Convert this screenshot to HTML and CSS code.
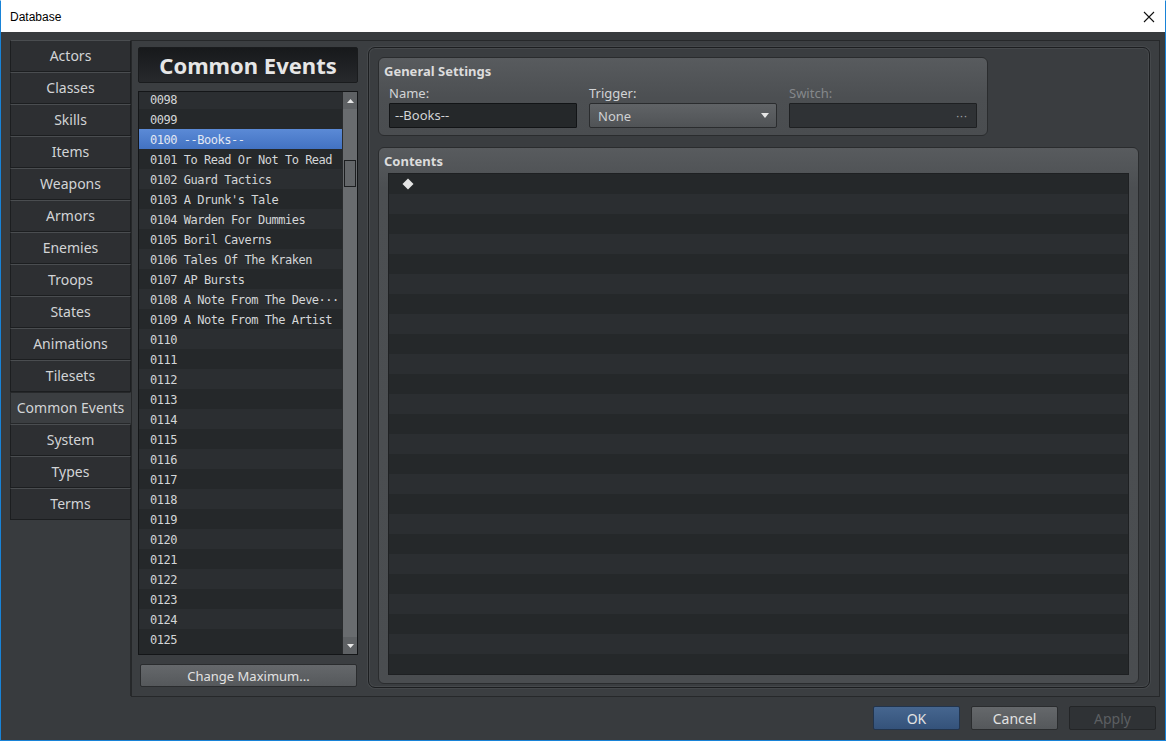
FILE: index.html
```html
<!DOCTYPE html>
<html lang="en">
<head>
    <meta charset="UTF-8">
    <title>Database</title>
    <link rel="stylesheet" href="styles.css">
</head>
<body>
    <div class="window">
        <!-- title bar -->
        <div class="titlebar">
            <span class="title">Database</span>
            <svg class="close" width="12" height="12" viewBox="0 0 12 12">
                <path d="M1 1 L11 11 M11 1 L1 11" stroke="#111" stroke-width="1.1" fill="none"/>
            </svg>
        </div>

        <div class="main">
            <!-- database tabs -->
            <div class="sidebar">
                <div class="tab">Actors</div>
                <div class="tab">Classes</div>
                <div class="tab">Skills</div>
                <div class="tab">Items</div>
                <div class="tab">Weapons</div>
                <div class="tab">Armors</div>
                <div class="tab">Enemies</div>
                <div class="tab">Troops</div>
                <div class="tab">States</div>
                <div class="tab">Animations</div>
                <div class="tab">Tilesets</div>
                <div class="tab active">Common Events</div>
                <div class="tab">System</div>
                <div class="tab">Types</div>
                <div class="tab">Terms</div>
            </div>

            <div class="page">
                <!-- event list -->
                <div class="list-column">
                    <div class="list-header">Common Events</div>
                    <div class="list-box">
                        <div class="rows" id="eventRows"></div>
                        <div class="scrollbar">
                            <div class="sb-btn">
                                <svg width="7" height="4" viewBox="0 0 7 4"><polygon points="0,4 7,4 3.5,0" fill="#e8e8e8"/></svg>
                            </div>
                            <div class="sb-track">
                                <div class="sb-thumb"></div>
                            </div>
                            <div class="sb-btn">
                                <svg width="7" height="4" viewBox="0 0 7 4"><polygon points="0,0 7,0 3.5,4" fill="#e8e8e8"/></svg>
                            </div>
                        </div>
                    </div>
                    <button class="btn btn-gray wide">Change Maximum...</button>
                </div>

                <!-- event editor -->
                <div class="editor">
                    <div class="group general">
                        <div class="group-title">General Settings</div>
                        <div class="fields">
                            <div class="field">
                                <label>Name:</label>
                                <div class="input">--Books--</div>
                            </div>
                            <div class="field">
                                <label>Trigger:</label>
                                <div class="combo">
                                    <span>None</span>
                                    <svg width="8" height="5" viewBox="0 0 8 5"><polygon points="0,0 8,0 4,5" fill="#e6e6e6"/></svg>
                                </div>
                            </div>
                            <div class="field disabled">
                                <label>Switch:</label>
                                <div class="input dim"><span class="dots">···</span></div>
                            </div>
                        </div>
                    </div>

                    <div class="group contents">
                        <div class="group-title">Contents</div>
                        <div class="command-list" id="commandRows">
                            <div class="cmd-row">
                                <svg class="diamond" width="12" height="12" viewBox="0 0 12 12"><polygon points="6,0.5 11.5,6 6,11.5 0.5,6" fill="#e4e4e4"/></svg>
                            </div>
                        </div>
                    </div>
                </div>
            </div>
        </div>

        <div class="footer">
            <button class="btn btn-blue">OK</button>
            <button class="btn btn-gray">Cancel</button>
            <button class="btn btn-off">Apply</button>
        </div>
    </div>

    <script>
        // list data
        const names = {
            100: '--Books--',
            101: 'To Read Or Not To Read',
            102: 'Guard Tactics',
            103: "A Drunk's Tale",
            104: 'Warden For Dummies',
            105: 'Boril Caverns',
            106: 'Tales Of The Kraken',
            107: 'AP Bursts',
            108: 'A Note From The Deve···',
            109: 'A Note From The Artist'
        };
        const rows = document.getElementById('eventRows');
        for (let i = 98; i <= 125; i++) {
            const row = document.createElement('div');
            row.className = 'row' + (i === 100 ? ' selected' : '');
            const id = String(i).padStart(4, '0');
            row.textContent = names[i] ? `${id} ${names[i]}` : id;
            rows.appendChild(row);
        }
        // empty command rows
        const cmds = document.getElementById('commandRows');
        for (let i = 0; i < 24; i++) {
            const row = document.createElement('div');
            row.className = 'cmd-row';
            cmds.appendChild(row);
        }
    </script>
</body>
</html>
```

FILE: styles.css
```css
:root {
    --window-border: #1883d7;
    --body-bg: #383b3e;
    --page-bg: #3b3e41;
    --tab-bg: #2d2f32;
    --line-dark: #1c1e20;
    --text: #d2d4d6;
    --row-light: #2b2e31;
    --row-dark: #25282a;
}
* {
    box-sizing: border-box;
}
body {
    margin: 0;
    font-family: "Noto Sans", "DejaVu Sans", sans-serif;
    color: var(--text);
}
.window {
    width: 1166px;
    height: 741px;
    border: 1px solid var(--window-border);
    border-top-color: #ffffff;
    background-color: var(--body-bg);
    display: flex;
    flex-direction: column;
}
.titlebar {
    height: 31px;
    background: #ffffff;
    display: flex;
    align-items: center;
    justify-content: space-between;
    padding: 0 10px 0 9px;
    color: #000;
}
.titlebar .title {
    font-family: "Liberation Sans", sans-serif;
    font-size: 12px;
}
.main {
    height: 665px;
    display: flex;
    padding: 8px 5px 0 9px;
}
.sidebar {
    width: 121px;
    display: flex;
    flex-direction: column;
    border-right: 1px solid #26282a;
    margin-bottom: 1px;
}
.tab {
    height: 32px;
    line-height: 30px;
    text-align: center;
    font-size: 14px;
    background: var(--tab-bg);
    border: 1px solid var(--line-dark);
    border-top-color: #4a4d50;
    margin-right: -1px;
}
.tab.active {
    background: var(--page-bg);
    border-color: #26282a;
    border-right-color: var(--page-bg);
    position: relative;
    z-index: 1;
}
.page {
    flex: 1;
    display: flex;
    gap: 10px;
    background: var(--page-bg);
    border: 1px solid #26282a;
    padding: 6px 9px 8px 6px;
}
.list-column {
    width: 220px;
    display: flex;
    flex-direction: column;
}
.list-header {
    height: 36px;
    margin-bottom: 8px;
    background: linear-gradient(#17191b, #27292c);
    border: 1px solid #1a1c1e;
    border-radius: 2px;
    text-align: center;
    font-weight: bold;
    font-size: 22px;
    line-height: 34px;
    color: #e6e6e6;
}
.list-box {
    flex: 1;
    display: flex;
    border: 1px solid #141618;
    overflow: hidden;
}
.rows {
    flex: 1;
    overflow: hidden;
    background: var(--row-dark);
}
.row {
    height: 20px;
    line-height: 23px;
    overflow: hidden;
    padding-left: 11px;
    font-family: "DejaVu Sans Mono", monospace;
    font-size: 12px;
    letter-spacing: -0.48px;
    white-space: nowrap;
    color: #d4d6d8;
    background: var(--row-light);
}
.row:first-child {
    margin-top: -3px;
}
.row:nth-child(even) {
    background: var(--row-dark);
}
.row.selected {
    background: linear-gradient(#5b8ad6, #4272c2);
    color: #e2e8f4;
}
.scrollbar {
    width: 15px;
    display: flex;
    flex-direction: column;
    background: #696c6f;
    border-left: 1px solid #2a2c2e;
}
.sb-btn {
    height: 17px;
    display: flex;
    align-items: center;
    justify-content: center;
    background: #5e6164;
}
.sb-track {
    flex: 1;
    padding-top: 51px;
}
.sb-thumb {
    height: 27px;
    margin: 0 1px;
    border: 1px solid #1c1e20;
    background: #636669;
}
.btn {
    font-family: "Noto Sans", "DejaVu Sans", sans-serif;
    font-size: 14px;
    height: 24px;
    border-radius: 2px;
    padding: 0;
    color: #e2e2e2;
}
.btn.wide {
    height: 23px;
    margin: 9px 1px 1px 2px;
    font-size: 13px;
}
.btn-gray {
    background: linear-gradient(#65686b, #55585b);
    border: 1px solid #2a2c2e;
}
.btn-blue {
    background: linear-gradient(#46668f, #34527a);
    border: 1px solid #22344c;
}
.btn-off {
    background: #2f3235;
    border: 1px solid #232527;
    color: #5c5f62;
}
.editor {
    flex: 1;
    display: flex;
    flex-direction: column;
    gap: 11px;
    border: 1px solid #1c1e20;
    box-shadow: inset 0 0 0 1px #46494c, 0 0 0 1px #45484b;
    border-radius: 7px;
    background: #3a3d40;
    padding: 9px 10px 7px 9px;
}
.group {
    border: 1px solid #2a2c2e;
    border-radius: 6px;
    background: linear-gradient(#585b5e, #4c4f52 40px, #4a4d50);
}
.group-title {
    font-weight: bold;
    font-size: 13px;
    line-height: 18px;
    color: #dcdcdc;
}
.general {
    align-self: flex-start;
    width: 610px;
    padding: 4px 9px 7px 5px;
}
.fields {
    display: grid;
    grid-template-columns: 188px 188px 188px;
    gap: 12px;
    margin: 4px 0 0 5px;
}
.field label {
    display: block;
    font-size: 13px;
    line-height: 18px;
    margin-bottom: 1px;
}
.field.disabled label {
    color: #85888b;
}
.input {
    height: 25px;
    background: #25282a;
    border: 1px solid #121416;
    border-radius: 1px;
    font-size: 13px;
    line-height: 23px;
    padding-left: 5px;
}
.input.dim {
    background: #2f3235;
    border-color: #1e2022;
    text-align: right;
    padding-right: 8px;
}
.dots {
    color: #a0a3a6;
    font-size: 11px;
    letter-spacing: 1px;
}
.combo {
    height: 25px;
    display: flex;
    align-items: center;
    justify-content: space-between;
    padding: 0 7px 0 8px;
    background: linear-gradient(#606366, #505356);
    border: 1px solid #2a2c2e;
    border-radius: 2px;
    font-size: 13px;
    color: #cfd1d3;
}
.contents {
    flex: 1;
    display: flex;
    flex-direction: column;
    padding: 4px 9px 8px 9px;
}
.contents .group-title {
    margin-left: -4px;
    margin-bottom: 3px;
}
.command-list {
    flex: 1;
    border: 1px solid #1e2022;
    background: var(--row-dark);
    overflow: hidden;
}
.cmd-row {
    height: 20px;
    background: var(--row-dark);
    display: flex;
    align-items: center;
    padding-left: 13px;
}
.cmd-row:nth-child(even) {
    background: var(--row-light);
}
.footer {
    flex: 1;
    display: flex;
    justify-content: flex-end;
    align-items: flex-start;
    gap: 11px;
    padding: 9px 9px 0 0;
}
.footer .btn {
    width: 87px;
}
```
